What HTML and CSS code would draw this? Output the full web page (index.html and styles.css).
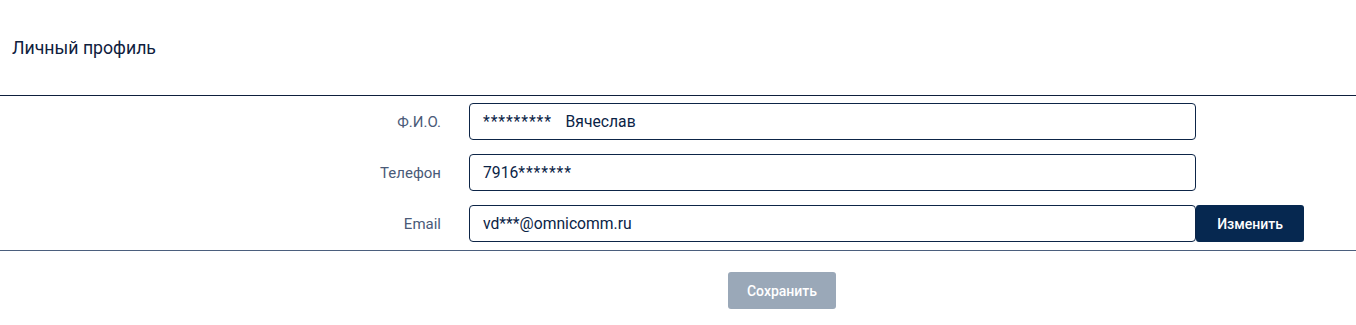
FILE: index.html
```html
<!DOCTYPE html>
<html lang="ru">
<head>
<meta charset="utf-8">
<title>Личный профиль</title>
<link rel="stylesheet" href="styles.css">
</head>
<body>
<div class="page">
  <header class="head">
    <h1 class="title">Личный профиль</h1>
  </header>
  <section class="form">
    <div class="row">
      <div class="label">Ф.И.О.</div>
      <div class="field"><span class="mask mask-name">*********</span>   Вячеслав</div>
    </div>
    <div class="row">
      <div class="label">Телефон</div>
      <div class="field">7916<span class="mask">*******</span></div>
    </div>
    <div class="row">
      <div class="label">Email</div>
      <div class="field">vd***@omnicomm.ru</div>
      <button class="btn btn-change" type="button">Изменить</button>
    </div>
  </section>
  <footer class="foot">
    <button class="btn btn-save" type="button">Сохранить</button>
  </footer>
</div>
</body>
</html>
```
FILE: styles.css
```css
html, body {
  margin: 0;
  padding: 0;
  background: #ffffff;
}
body {
  font-family: Roboto, "Liberation Sans", Arial, sans-serif;
  color: #0a2346;
}
.page {
  width: 1356px;
}
.head {
  height: 96px;
  display: flex;
  align-items: center;
  padding-left: 12px;
  box-sizing: border-box;
  border-bottom: 1px solid #0e1f3d;
}
.title {
  margin: 0;
  font-size: 17.7px;
  font-weight: 400;
  color: #0f203d;
}
.form {
  display: flex;
  flex-direction: column;
  gap: 14px;
  padding: 7px 0 8px 0;
  border-bottom: 1px solid #4b5f7d;
}
.row {
  display: grid;
  grid-template-columns: 469px 727px 108px;
  align-items: center;
  height: 37px;
}
.label {
  text-align: right;
  padding-right: 28px;
  font-size: 15px;
  color: #4a5a78;
}
.field {
  height: 37px;
  box-sizing: border-box;
  border: 1px solid #0d2547;
  border-radius: 4px;
  padding: 0 13px;
  display: flex;
  align-items: center;
  font-size: 15.7px;
  color: #0a2346;
  white-space: pre;
}
.mask {
  letter-spacing: 0.9px;
}
.mask-name {
  margin-right: 2px;
}
.btn {
  font-family: Roboto, "Liberation Sans", Arial, sans-serif;
  border: none;
  border-radius: 3px;
  color: #ffffff;
  font-weight: 500;
  cursor: pointer;
  padding: 0;
}
.btn-change {
  width: 108px;
  height: 37px;
  background: #062850;
  font-size: 14px;
}
.foot {
  padding: 21px 0 0 728px;
}
.btn-save {
  width: 108px;
  height: 37px;
  background: #9aa8b8;
  font-size: 14px;
}
```
